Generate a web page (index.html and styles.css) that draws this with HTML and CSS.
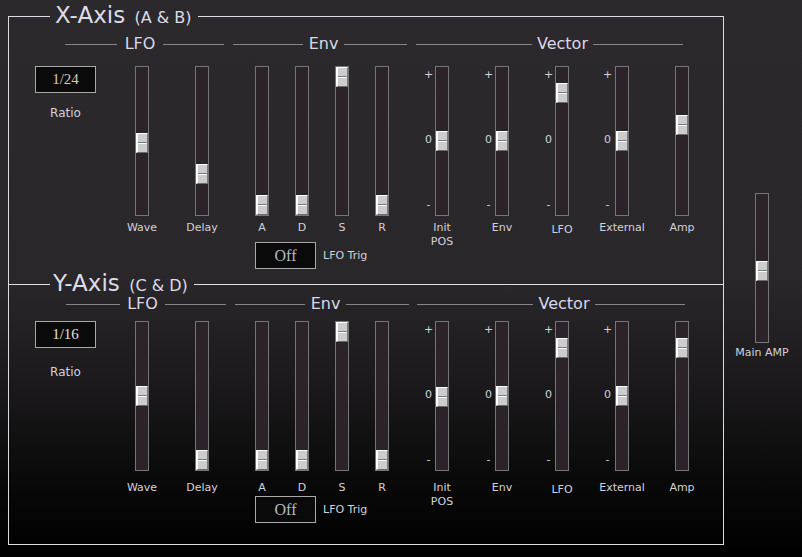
FILE: index.html
```html
<!DOCTYPE html>
<html>
<head>
<meta charset="utf-8">
<link rel="stylesheet" href="styles.css">
</head>
<body>
<div class="page">
  <div class="panel">
    <fieldset class="grp gx">
      <legend class="lg">X-Axis <span class="sub">(A &amp; B)</span></legend>
      <div class="heads">
        <div class="hd hd-lfo"><span class="ln"></span><span class="ht">LFO</span><span class="ln"></span></div>
        <div class="hd hd-env"><span class="ln"></span><span class="ht">Env</span><span class="ln"></span></div>
        <div class="hd hd-vec"><span class="ln"></span><span class="ht">Vector</span><span class="ln"></span></div>
      </div>
      <div class="ctrls">
        <div class="ratio">
          <div class="disp">1/24</div>
          <div class="rlbl">Ratio</div>
        </div>
        <div class="g-lfo">
          <div class="col"><div class="track"><div class="thumb" style="top:66px"></div></div><div class="lbl">Wave</div></div>
          <div class="col"><div class="track"><div class="thumb" style="top:97px"></div></div><div class="lbl">Delay</div></div>
        </div>
        <div class="env">
          <div class="g-env">
            <div class="col"><div class="track"><div class="thumb" style="top:128px"></div></div><div class="lbl">A</div></div>
            <div class="col"><div class="track"><div class="thumb" style="top:128px"></div></div><div class="lbl">D</div></div>
            <div class="col"><div class="track"><div class="thumb" style="top:0px"></div></div><div class="lbl">S</div></div>
            <div class="col"><div class="track"><div class="thumb" style="top:128px"></div></div><div class="lbl">R</div></div>
          </div>
          <div class="trig"><div class="disp off">Off</div><span class="tlbl">LFO Trig</span></div>
        </div>
        <div class="g-vec">
          <div class="col"><div class="track"><div class="marks"><span>+</span><span>0</span><span>-</span></div><div class="thumb" style="top:64px"></div></div><div class="lbl two">Init<br>POS</div></div>
          <div class="col"><div class="track"><div class="marks"><span>+</span><span>0</span><span>-</span></div><div class="thumb" style="top:64px"></div></div><div class="lbl">Env</div></div>
          <div class="col"><div class="track"><div class="marks"><span>+</span><span>0</span><span>-</span></div><div class="thumb" style="top:16px"></div></div><div class="lbl low">LFO</div></div>
          <div class="col"><div class="track"><div class="marks wide"><span>+</span><span>0</span><span>-</span></div><div class="thumb" style="top:64px"></div></div><div class="lbl">External</div></div>
          <div class="col"><div class="track"><div class="thumb" style="top:48px"></div></div><div class="lbl">Amp</div></div>
        </div>
      </div>
    </fieldset>
    <fieldset class="grp gy">
      <legend class="lg">Y-Axis <span class="sub">(C &amp; D)</span></legend>
      <div class="heads">
        <div class="hd hd-lfo"><span class="ln"></span><span class="ht">LFO</span><span class="ln"></span></div>
        <div class="hd hd-env"><span class="ln"></span><span class="ht">Env</span><span class="ln"></span></div>
        <div class="hd hd-vec"><span class="ln"></span><span class="ht">Vector</span><span class="ln"></span></div>
      </div>
      <div class="ctrls">
        <div class="ratio">
          <div class="disp">1/16</div>
          <div class="rlbl">Ratio</div>
        </div>
        <div class="g-lfo">
          <div class="col"><div class="track"><div class="thumb" style="top:64px"></div></div><div class="lbl">Wave</div></div>
          <div class="col"><div class="track"><div class="thumb" style="top:128px"></div></div><div class="lbl">Delay</div></div>
        </div>
        <div class="env">
          <div class="g-env">
            <div class="col"><div class="track"><div class="thumb" style="top:128px"></div></div><div class="lbl">A</div></div>
            <div class="col"><div class="track"><div class="thumb" style="top:128px"></div></div><div class="lbl">D</div></div>
            <div class="col"><div class="track"><div class="thumb" style="top:0px"></div></div><div class="lbl">S</div></div>
            <div class="col"><div class="track"><div class="thumb" style="top:128px"></div></div><div class="lbl">R</div></div>
          </div>
          <div class="trig"><div class="disp off">Off</div><span class="tlbl">LFO Trig</span></div>
        </div>
        <div class="g-vec">
          <div class="col"><div class="track"><div class="marks"><span>+</span><span>0</span><span>-</span></div><div class="thumb" style="top:65px"></div></div><div class="lbl two">Init<br>POS</div></div>
          <div class="col"><div class="track"><div class="marks"><span>+</span><span>0</span><span>-</span></div><div class="thumb" style="top:64px"></div></div><div class="lbl">Env</div></div>
          <div class="col"><div class="track"><div class="marks"><span>+</span><span>0</span><span>-</span></div><div class="thumb" style="top:16px"></div></div><div class="lbl low">LFO</div></div>
          <div class="col"><div class="track"><div class="marks wide"><span>+</span><span>0</span><span>-</span></div><div class="thumb" style="top:64px"></div></div><div class="lbl">External</div></div>
          <div class="col"><div class="track"><div class="thumb" style="top:16px"></div></div><div class="lbl">Amp</div></div>
        </div>
      </div>
    </fieldset>
  </div>
  <div class="side">
    <div class="track"><div class="thumb" style="top:67px"></div></div>
    <div class="lbl">Main AMP</div>
  </div>
</div>
</body>
</html>
```

FILE: styles.css
```css
html {
  height: 100%;
  background: linear-gradient(to bottom, #2c292c 0%, #2a272a 50%, #1a181a 70%, #080808 88%, #000 100%);
}
body {
  margin: 0;
  height: 100%;
  font-family: "DejaVu Sans", sans-serif;
  color: #d2d2dc;
}
.page {
  display: flex;
  align-items: flex-start;
}
.panel {
  margin-left: 8px;
  padding-top: 5px;
  display: flex;
  flex-direction: column;
}
.grp {
  margin: 0;
  padding: 0;
  min-width: 0;
  width: 716px;
  box-sizing: border-box;
  border: 1px solid #dcdce4;
}
.gx {
  height: 280px;
  border-bottom: none;
}
.gy {
  margin-top: -12px;
  height: 272px;
}
.lg {
  margin-left: 41px;
  padding: 0 6px 2px 5px;
  font-size: 23px;
  line-height: 20px;
  color: #dcdce8;
  white-space: nowrap;
}
.gy .lg {
  padding-left: 3px;
}
.sub {
  font-size: 16px;
  line-height: 10px;
  margin-left: 2px;
}
.heads {
  display: flex;
}
.gx .heads { margin-top: 8px; }
.gy .heads { margin-top: 0; }
.hd {
  display: grid;
  align-items: center;
  height: 18px;
}
.ln {
  height: 1px;
  background: #85858b;
}
.ht {
  text-align: center;
  font-size: 16px;
  line-height: 18px;
  color: #d8d8e8;
}
.gx .hd-lfo { margin-left: 56px; grid-template-columns: 52px 46px 61px; }
.gx .hd-env { margin-left: 9px; grid-template-columns: 70px 41px 63px; }
.gx .hd-vec { margin-left: 9px; grid-template-columns: 116px 61px 90px; }
.gy .hd-lfo { margin-left: 57px; grid-template-columns: 54px 45px 61px; }
.gy .hd-env { margin-left: 9px; grid-template-columns: 70px 41px 63px; }
.gy .hd-vec { margin-left: 8px; grid-template-columns: 116px 62px 90px; }

.ctrls {
  display: flex;
  align-items: flex-start;
}
.gx .ctrls { margin-top: 13px; }
.gy .ctrls { margin-top: 8px; }

.ratio {
  margin-left: 26px;
  width: 61px;
  display: flex;
  flex-direction: column;
  align-items: center;
}
.disp {
  box-sizing: border-box;
  width: 61px;
  height: 27px;
  border: 1px solid #a8a8a8;
  background: #0a0a0a;
  font-family: "Liberation Serif", serif;
  font-size: 15px;
  line-height: 25px;
  text-align: center;
  color: #d9ccb0;
}
.gy .disp { color: #e6e0d4; }
.disp.off {
  font-size: 16px;
  color: #b4bcc8;
}
.rlbl {
  font-size: 12px;
  line-height: 14px;
}
.gx .rlbl { margin-top: 13px; }
.gy .rlbl { margin-top: 17px; }

.g-lfo {
  margin-left: 26px;
  display: flex;
  gap: 20px;
}
.env {
  margin-left: 20px;
  display: flex;
  flex-direction: column;
}
.g-env {
  display: flex;
}
.g-vec {
  margin-left: 20px;
  display: flex;
  gap: 20px;
}
.col {
  width: 40px;
  display: flex;
  flex-direction: column;
  align-items: center;
}
.track {
  position: relative;
  box-sizing: border-box;
  width: 14px;
  height: 150px;
  border: 1px solid #737579;
  background: #2c2229;
}
.thumb {
  position: absolute;
  left: 0;
  width: 12px;
  height: 20px;
  box-sizing: border-box;
  background: #cdcdcd;
  border-style: solid;
  border-width: 1px 1px 1px 2px;
  border-color: #ffffff #7a7a7a #6a6a6a #ffffff;
}
.thumb::after {
  content: "";
  position: absolute;
  left: 0;
  right: 0;
  top: 8px;
  height: 1px;
  background: #7a7a7a;
  box-shadow: 0 1px 0 #ffffff;
}
.marks {
  position: absolute;
  right: calc(100% + 3px);
  top: 0;
  bottom: 0;
  width: 9px;
  box-sizing: border-box;
  padding: 1px 0 4px;
  display: flex;
  flex-direction: column;
  justify-content: space-between;
  align-items: center;
  font-size: 11px;
  line-height: 13px;
  color: #d2d2dc;
}
.marks.wide {
  right: calc(100% + 4px);
}
.lbl {
  font-size: 11px;
  line-height: 13px;
  white-space: nowrap;
  text-align: center;
}
.lbl.two { line-height: 14px; }
.gx .lbl { margin-top: 5px; }
.gy .lbl { margin-top: 10px; }
.gx .lbl.low { margin-top: 7px; }
.gy .lbl.low { margin-top: 12px; }

.trig {
  display: flex;
  align-items: center;
  gap: 7px;
  margin-left: 13px;
}
.gx .trig { margin-top: 8px; }
.gy .trig { margin-top: 2px; }
.tlbl {
  font-size: 11px;
  line-height: 13px;
}

.side {
  margin-left: 12px;
  width: 52px;
  padding-top: 193px;
  display: flex;
  flex-direction: column;
  align-items: center;
}
.side .lbl {
  margin-top: 3px;
}
```
